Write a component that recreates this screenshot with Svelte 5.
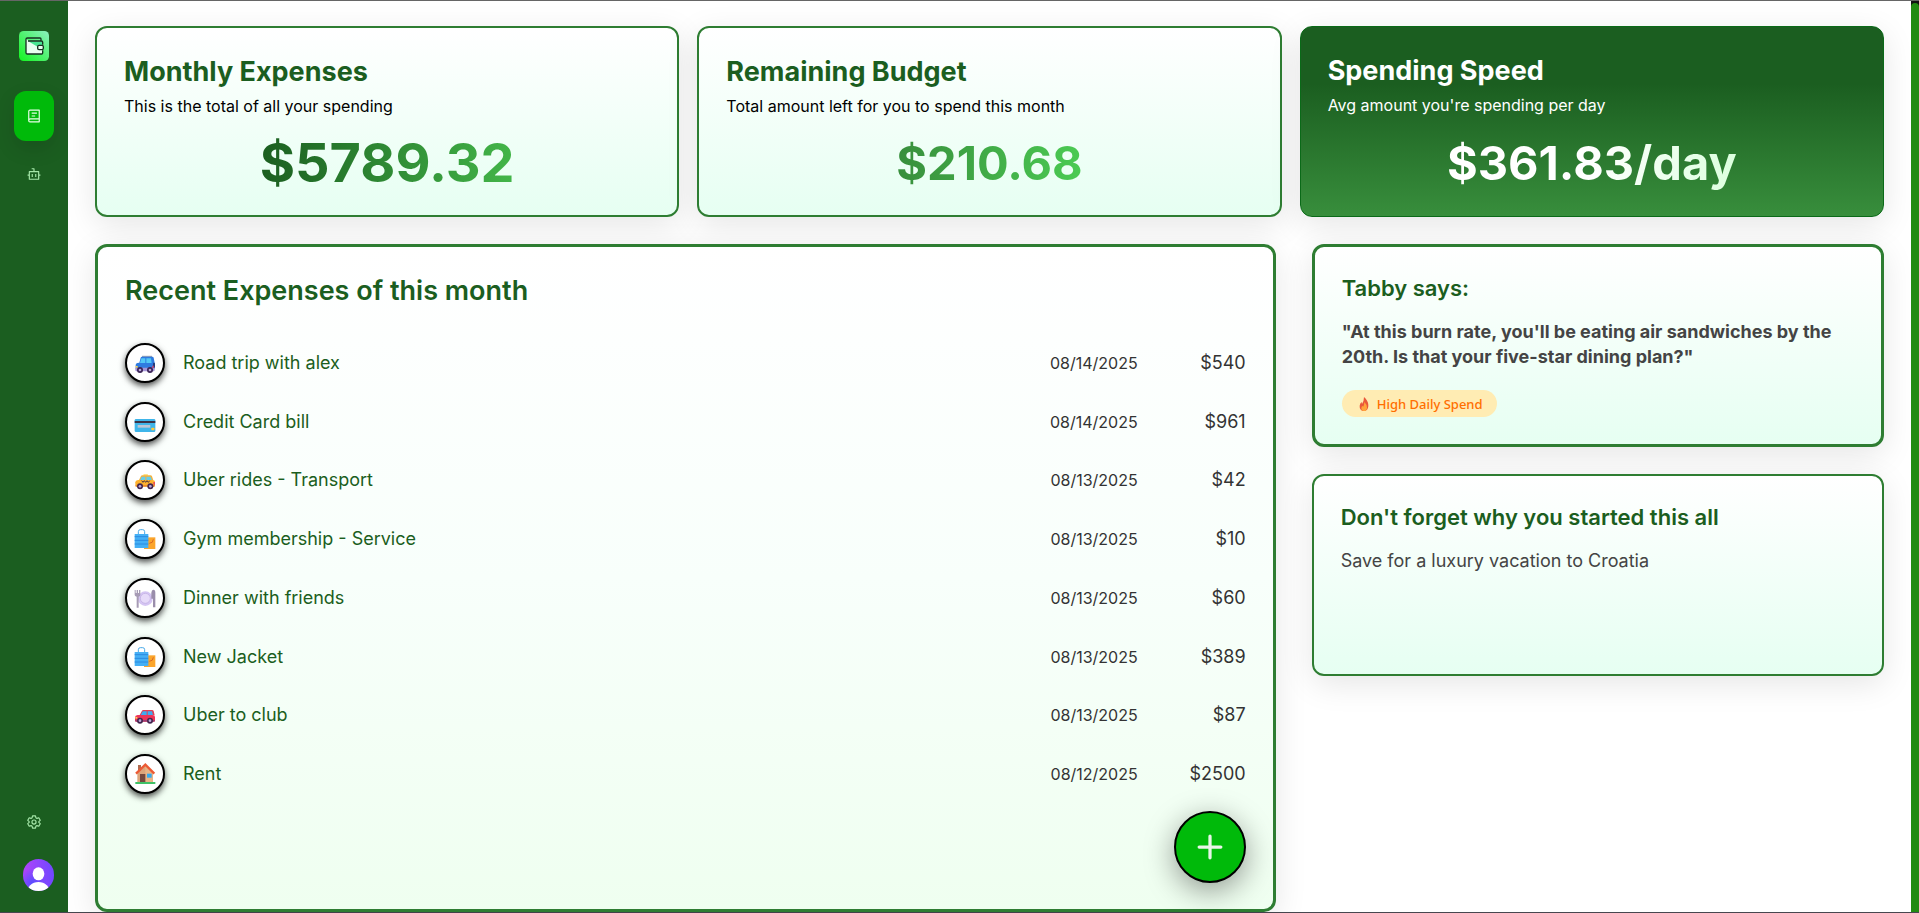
<script lang="ts">
  type Expense = {
    icon: 'suv' | 'card' | 'taxi' | 'bags' | 'plate' | 'car' | 'house';
    title: string;
    date: string;
    amount: number;
  };

  const stats = [
    { kind: 'total', title: 'Monthly Expenses', note: 'This is the total of all your spending', value: '$5789.32' },
    { kind: 'left', title: 'Remaining Budget', note: 'Total amount left for you to spend this month', value: '$210.68' },
    { kind: 'speed', title: 'Spending Speed', note: "Avg amount you're spending per day", value: '$361.83/day' },
  ];

  const expenses: Expense[] = [
    { icon: 'suv', title: 'Road trip with alex', date: '08/14/2025', amount: 540 },
    { icon: 'card', title: 'Credit Card bill', date: '08/14/2025', amount: 961 },
    { icon: 'taxi', title: 'Uber rides - Transport', date: '08/13/2025', amount: 42 },
    { icon: 'bags', title: 'Gym membership - Service', date: '08/13/2025', amount: 10 },
    { icon: 'plate', title: 'Dinner with friends', date: '08/13/2025', amount: 60 },
    { icon: 'bags', title: 'New Jacket', date: '08/13/2025', amount: 389 },
    { icon: 'car', title: 'Uber to club', date: '08/13/2025', amount: 87 },
    { icon: 'house', title: 'Rent', date: '08/12/2025', amount: 2500 },
  ];
</script>

<!-- Category pictures, all drawn on a 60 unit square -->
{#snippet picture(name: Expense['icon'])}
  <svg class="picture" viewBox="0 0 60 60" aria-hidden="true">
    {#if name === 'suv'}
      <path d="M21 10h30" stroke="#8d93a8" stroke-width="3" />
      <path d="M17 14q1-3 4-3h31q3 0 4 3l3 16v16q0 4-4 4H5q-3 0-3-4V36q0-5 5-6l6-1z" fill="#2f7be0" />
      <path d="M19 16h12v14H15zM34 16h14l2 14H34z" fill="#53c8f5" />
      <path d="M1 44h58v8q0 3-4 3H5q-4 0-4-3z" fill="#a694d6" />
      <rect x="54" y="29" width="6" height="15" rx="2" fill="#263b78" />
      <path d="M2 39h6v5H2z" fill="#ffd24d" />
      <path d="M52 38h4v7h-4z" fill="#e43f65" />
      <circle cx="15" cy="51" r="9" fill="#3a2357" /><circle cx="15" cy="51" r="4" fill="#b9a8d8" />
      <circle cx="45" cy="51" r="9" fill="#3a2357" /><circle cx="45" cy="51" r="4" fill="#b9a8d8" />
    {:else if name === 'card'}
      <rect x="-1" y="21" width="62" height="39" rx="4" fill="#3fb5ea" />
      <path d="M-1 27h62v6H-1z" fill="#3b3247" />
      <rect x="8" y="39" width="38" height="8" fill="#bdc6d6" />
      <rect x="49" y="47" width="9" height="8" rx="2" fill="#ffc93c" />
    {:else if name === 'taxi'}
      <rect x="25" y="12" width="14" height="6" rx="2" fill="#ffe28a" />
      <path d="M12 30l6-12q1-2 4-2h24q4 0 5 3l4 12z" fill="#f6b13a" />
      <path d="M20 20h11v11H15zM34 20h13l4 11H34z" fill="#67cdea" />
      <path d="M1 37q0-6 8-7h43q8 0 8 7v9q0 4-4 4H4q-3 0-3-4z" fill="#ffb22e" />
      <path d="M20 32l4 5 4-5 4 5 4-5 4 5 4-5" fill="none" stroke="#4b3340" stroke-width="3" />
      <path d="M55 36h5v8h-5z" fill="#ea4a5b" /><path d="M2 45h57v5H2z" fill="#e98b32" />
      <circle cx="15" cy="49" r="9" fill="#43264f" /><circle cx="15" cy="49" r="4" fill="#b9a8d8" />
      <circle cx="46" cy="49" r="9" fill="#43264f" /><circle cx="46" cy="49" r="4" fill="#b9a8d8" />
    {:else if name === 'bags'}
      <path d="M27 25h34v35H27z" fill="#fba52c" />
      <path d="M43 43q12-1 12-12" fill="none" stroke="#d96624" stroke-width="3" />
      <path d="M10 16V8q0-6 6-6h7q6 0 6 6v8" fill="none" stroke="#47a8e8" stroke-width="3" />
      <path d="M-1 15h41v42H-1z" fill="#45aff5" />
      <path d="M-1 23h41M-1 34h41M-1 45h41" stroke="#2b8ae0" stroke-width="3" />
    {:else if name === 'plate'}
      <circle cx="31" cy="32" r="22" fill="#d5c5f3" />
      <circle cx="31" cy="31" r="15" fill="#e6daf9" stroke="#bda9e0" stroke-width="2" />
      <path d="M-1 6h3v9h3V6h4v9h3V6h4v15q0 4-5 5v33H5V26q-6-1-6-5z" fill="#a79bb5" />
      <path d="M55 5q6 0 6 9v44h-7V32h-5V14q1-9 6-9z" fill="#9a8dab" />
    {:else if name === 'car'}
      <path d="M14 30l7-13q1-2 4-2h26q4 0 5 3l3 13z" fill="#e33e55" />
      <path d="M23 19h12v12H17zM38 19h13l3 12H38z" fill="#3facf0" />
      <path d="M0 37q0-6 8-7h44q8 0 8 6v10q0 4-4 4H4q-4 0-4-4z" fill="#ee3458" />
      <path d="M1 36h6v5H1z" fill="#ffd357" /><path d="M1 45h58v5H1z" fill="#9d3b70" />
      <circle cx="15" cy="47" r="9" fill="#42264f" /><circle cx="15" cy="47" r="4" fill="#b9a8d8" />
      <circle cx="45" cy="47" r="9" fill="#42264f" /><circle cx="45" cy="47" r="4" fill="#b9a8d8" />
    {:else}
      <path d="M9 3h9v20H9z" fill="#b06a4f" />
      <path d="M7 28L31 5l23 23v29H7z" fill="#dca47a" />
      <path d="M31 5l23 23v29H31z" fill="#eab486" />
      <path d="M3 29L31 2l27 27" fill="none" stroke="#ec5a35" stroke-width="7" />
      <rect x="15" y="30" width="16" height="26" fill="#75483e" />
      <rect x="36" y="29" width="14" height="12" fill="#35a9ee" />
      <path d="M1 54h60v6H1z" fill="#3fc167" />
    {/if}
  </svg>
{/snippet}

<div class="page">
  <nav class="sidebar" aria-label="Main">
    <a class="logo" href="#home" aria-label="Home">
      <svg viewBox="0 0 90 90">
        <defs>
          <linearGradient id="tile" x1="0" y1="1" x2="1" y2="0">
            <stop offset="0" stop-color="#12f51e" />
            <stop offset="1" stop-color="#8df0c0" />
          </linearGradient>
        </defs>
        <rect width="90" height="90" rx="14" fill="url(#tile)" />
        <path d="M21 23v43q0 3 3 3h44q3 0 3-3V34q0-3-3-3H30z" fill="#e9fff1" />
        <path d="M28 31h42v18H58z" fill="#48e592" />
        <path
          d="M66 30V24q0-3-3-3H25q-4 0-4 4v40q0 4 4 4h43q3 0 3-3v-8M71 41v-7q0-4-4-4H27"
          fill="none"
          stroke="#163020"
          stroke-width="4"
        />
        <rect x="56" y="43" width="17" height="13" rx="4" fill="#e9fff1" stroke="#163020" stroke-width="4" />
      </svg>
    </a>

    <a class="item active" href="#expenses" aria-label="Expenses" aria-current="page">
      <svg viewBox="0 0 24 24">
        <path d="M3 20V4q0-2 2-2h16v20H5q-2 0-2-2q0-3 3-3h15M8 7h9M8 12h6" />
      </svg>
    </a>
    <a class="item" href="#assistant" aria-label="Assistant">
      <svg viewBox="0 0 24 24">
        <path d="M12 8V3H8M4 8h16v13H4zM1 14h3M20 14h3M9 12v5M15 12v5" />
      </svg>
    </a>

    <a class="item settings" href="#settings" aria-label="Settings">
      <svg viewBox="0 0 24 24">
        <path
          d="M9.5 1.5h5l.7 3.2 1.9 1.1 3.1-1 2.5 4.3-2.4 2.2v1.4l2.4 2.2-2.5 4.3-3.1-1-1.9 1.1-.7 3.2h-5l-.7-3.2-1.9-1.1-3.1 1-2.5-4.3 2.4-2.2v-1.4L1.3 9.100l2.500-4.300 3.100 1 1.900-1.100z"
        />
        <circle cx="12" cy="12" r="3.5" />
      </svg>
    </a>
    <button class="avatar" type="button" aria-label="Account">
      <svg viewBox="0 0 90 96">
        <ellipse cx="45" cy="43" rx="17" ry="19" />
        <ellipse cx="45" cy="98" rx="34" ry="31" />
      </svg>
    </button>
  </nav>

  <main>
    <section class="stats">
      {#each stats as stat (stat.kind)}
        <article class="card stat {stat.kind}">
          <h2>{stat.title}</h2>
          <p class="note">{stat.note}</p>
          <p class="value"><span>{stat.value}</span></p>
        </article>
      {/each}
    </section>

    <section class="details">
      <article class="card thick recent">
        <h2>Recent Expenses of this month</h2>
        <ul>
          {#each expenses as expense}
            <li>
              <span class="badge">{@render picture(expense.icon)}</span>
              <span class="title">{expense.title}</span>
              <time>{expense.date}</time>
              <span class="amount">${expense.amount}</span>
            </li>
          {/each}
        </ul>
        <button class="add" type="button" aria-label="Add expense">
          <svg viewBox="0 0 24 24"><path d="M12 2v20M2 12h20" /></svg>
        </button>
      </article>

      <aside>
        <article class="card thick tabby">
          <h3>Tabby says:</h3>
          <p class="quote">"At this burn rate, you'll be eating air sandwiches by the 20th. Is that your five-star dining plan?"</p>
          <span class="tag">
            <svg viewBox="0 0 28 42" aria-hidden="true">
              <path d="M14 0q12 10 13 24 1 17-13 18Q0 41 1 26q1-7 6-11l1 6q6-8 6-21z" fill="#e9573a" />
              <path d="M15 15q9 9 8 17-1 10-9 10-9-1-8-10 1-4 4-6l1 4q4-5 4-15z" fill="#ffa43a" />
            </svg>
            High Daily Spend
          </span>
        </article>

        <article class="card goal">
          <h3>Don't forget why you started this all</h3>
          <p>Save for a luxury vacation to Croatia</p>
        </article>
      </aside>
    </section>
  </main>

  <div class="scrollbar" aria-hidden="true"><div class="thumb"></div></div>
</div>

<style>
  :global(body) {
    background: #fff;
    color: #333;
    font-family: Inter, sans-serif;
  }
  .page {
    display: flex;
    box-sizing: border-box;
    min-height: 100vh;
    border-top: 1px solid #666;
    border-bottom: 1px solid #47474f;
  }
  h2, h3, p, ul { margin: 0; padding: 0; }
  button { padding: 0; cursor: pointer; }

  .sidebar {
    display: flex;
    flex-direction: column;
    align-items: center;
    flex: none;
    box-sizing: border-box;
    width: 68px;
    padding: 30px 14px 21px;
    background: #1b5e20;
  }
  .logo { width: 30px; height: 30px; margin-bottom: 30px; }
  .logo svg { display: block; }
  .item {
    display: grid;
    place-items: center;
    width: 40px;
    height: 50px;
    margin-bottom: 8px;
    border-radius: 12px;
  }
  .item svg {
    width: 14px;
    height: 14px;
    fill: none;
    stroke: #a5e6a8;
    stroke-width: 2;
    stroke-linejoin: round;
    overflow: visible;
  }
  .active {
    background: #00ba0a;
    box-shadow: 0 8px 20px rgba(0, 0, 0, 0.12);
  }
  .active svg { stroke: #e8ffe9; }
  .settings { margin-top: auto; margin-bottom: 12px; }
  .avatar {
    align-self: flex-end;
    width: 31px;
    height: 32px;
    border: none;
    border-radius: 16px;
    overflow: hidden;
    background: radial-gradient(circle at 30% 75%, #5a4cff, transparent 45%), linear-gradient(90deg, #b044fa, #7048ff);
  }
  .avatar svg { display: block; fill: #fff; }

  main {
    display: flex;
    flex-direction: column;
    flex: 1;
    gap: 27px;
    min-width: 0;
    padding: 25px 27px 0;
  }
  .stats {
    display: grid;
    grid-template-columns: repeat(3, 1fr);
    gap: 18px;
  }
  .details {
    display: grid;
    grid-template-columns: repeat(3, 1fr);
    gap: 36px;
    flex: 1;
  }
  .card {
    box-sizing: border-box;
    padding: 27px;
    border: 2px solid #2e7d32;
    border-radius: 12px;
    background: linear-gradient(#fff, #e6fff2);
    box-shadow: 0 8px 32px rgba(0, 0, 0, 0.1);
  }
  .thick { border-width: 3px; }
  h2 {
    color: #1b5e20;
    font-size: 27px;
    font-weight: 700;
    line-height: 33px;
  }
  h3 {
    margin-bottom: 17px;
    color: #1b5e20;
    font-size: 22px;
    font-weight: 600;
    line-height: 28px;
  }

  .note {
    margin-top: 6px;
    color: #000;
    font-size: 16px;
    line-height: 24px;
  }
  .value {
    margin-top: 20px;
    font-size: 47px;
    font-weight: 700;
    line-height: 50px;
    text-align: center;
  }
  .value span {
    background: linear-gradient(90deg, #388e3c, #4bcb53);
    background-clip: text;
    color: transparent;
  }
  .total .value { font-size: 54px; }
  .total .value span { background-image: linear-gradient(90deg, #1b5e20, #43b649); }
  .speed {
    border: 1px solid #0a6a18;
    background: linear-gradient(#1b5e20 30%, #388e3c);
  }
  .speed h2, .speed .note { color: #fff; }
  .speed .value { margin-top: 21px; }
  .speed .value span { background-image: linear-gradient(90deg, #fff 50%, #dcffde); }

  .recent {
    display: flex;
    flex-direction: column;
    grid-column: span 2;
    padding-bottom: 26px;
    background: linear-gradient(#fff, #f8fffb 50%, #effff0);
  }
  .recent h2 { font-weight: 600; }
  ul {
    display: flex;
    flex-direction: column;
    justify-content: space-between;
    min-height: 451px;
    margin-top: 36px;
    list-style: none;
  }
  li {
    display: grid;
    grid-template-columns: 40px 1fr auto 90px;
    align-items: center;
    column-gap: 18px;
    font-size: 18px;
    line-height: 24px;
  }
  .badge {
    display: grid;
    place-items: center;
    box-sizing: border-box;
    width: 40px;
    height: 40px;
    border: 2px solid #000;
    border-radius: 50%;
    background: #fff;
    box-shadow: 0 3px 6px rgba(0, 0, 0, 0.7);
  }
  .picture { width: 20px; height: 20px; overflow: visible; }
  .title { color: #1b5e20; }
  time { font-size: 16px; }
  .amount { text-align: right; }
  .add {
    display: grid;
    place-items: center;
    align-self: flex-end;
    width: 72px;
    height: 72px;
    margin-top: auto;
    border: 2px solid #000;
    border-radius: 50%;
    background: #00ba0a;
    box-shadow: 0 8px 30px rgba(0, 0, 0, 0.4);
  }
  .add svg {
    width: 26px;
    height: 26px;
    stroke: #e8f5e9;
    stroke-width: 3;
    stroke-linecap: round;
  }

  aside {
    display: flex;
    flex-direction: column;
    gap: 27px;
  }
  .quote {
    margin-bottom: 21px;
    color: #444;
    font-size: 18px;
    font-weight: 700;
    line-height: 25px;
  }
  .tag {
    display: flex;
    align-items: center;
    gap: 8px;
    width: fit-content;
    height: 27px;
    padding: 0 14px 0 17px;
    border-radius: 14px;
    background: #ffecb3;
    color: #ff6f00;
    font-family: "Noto Sans", sans-serif;
    font-size: 13px;
    font-weight: 500;
  }
  .tag svg { width: 10px; height: 14px; }
  .goal { min-height: 202px; }
  .goal p {
    color: #444;
    font-size: 18px;
    line-height: 25px;
  }

  .scrollbar {
    flex: none;
    width: 8px;
    padding-top: 2px;
    background: #111;
  }
  .thumb {
    height: 100%;
    border-radius: 4px 4px 0 0;
    background: #228b12;
  }
</style>
